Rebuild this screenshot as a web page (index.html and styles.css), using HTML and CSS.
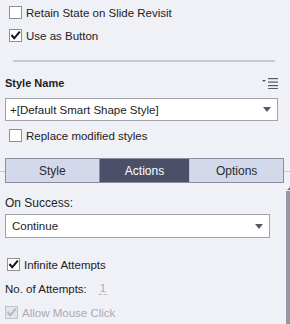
FILE: index.html
```html
<!DOCTYPE html>
<html lang="en">
  <head>
    <meta charset="UTF-8" />
    <title>Properties</title>
    <link rel="stylesheet" href="styles.css">
  </head>
  <body>
    <div class="panel">
      <div class="row row-top">
        <span class="check"></span>
        <span class="label">Retain State on Slide Revisit</span>
      </div>
      <div class="row">
        <span class="check">
          <svg viewBox="0 0 13 13" width="13" height="13"><path d="M2.5 6 L5.2 9.3 L10.8 2.6" fill="none" stroke="#111" stroke-width="2"/></svg>
        </span>
        <span class="label">Use as Button</span>
      </div>

      <div class="divider"></div>

      <div class="section-head">
        <span class="head-title">Style Name</span>
        <svg class="menu-icon" viewBox="0 0 16 12" width="16" height="12">
          <path d="M0 3 L4 3 L2 5 Z" fill="#555a6a"/>
          <rect x="6" y="1" width="10" height="1.2" fill="#555a6a"/>
          <rect x="6" y="4.5" width="10" height="1.2" fill="#555a6a"/>
          <rect x="6" y="8" width="10" height="1.2" fill="#555a6a"/>
          <rect x="6" y="11" width="10" height="1" fill="#555a6a"/>
        </svg>
      </div>
      <div class="select select-style">
        <span>+[Default Smart Shape Style]</span>
        <span class="arrow"></span>
      </div>
      <div class="row row-replace">
        <span class="check"></span>
        <span class="label">Replace modified styles</span>
      </div>

      <div class="tabs-wrap">
        <div class="tabs">
          <div class="tab">Style</div>
          <div class="tab active">Actions</div>
          <div class="tab">Options</div>
        </div>
      </div>

      <div class="scroll-area">
        <div class="content">
          <div class="field-label">On Success:</div>
          <div class="select select-success">
            <span>Continue</span>
            <span class="arrow"></span>
          </div>
          <div class="row row-infinite">
            <span class="check">
              <svg viewBox="0 0 13 13" width="13" height="13"><path d="M2.5 6 L5.2 9.3 L10.8 2.6" fill="none" stroke="#111" stroke-width="2"/></svg>
            </span>
            <span class="label">Infinite Attempts</span>
          </div>
          <div class="row attempts">
            <span class="label">No. of Attempts:</span>
            <span class="num">1</span>
          </div>
          <div class="row disabled">
            <span class="check">
              <svg viewBox="0 0 13 13" width="13" height="13"><path d="M2.5 6 L5.2 9.3 L10.8 2.6" fill="none" stroke="#b4b6c0" stroke-width="2"/></svg>
            </span>
            <span class="label">Allow Mouse Click</span>
          </div>
        </div>
        <div class="scrollbar">
          <span class="scroll-up"></span>
          <span class="thumb"></span>
        </div>
      </div>
    </div>
  </body>
</html>
```

FILE: styles.css
```css
* {
  margin: 0;
  padding: 0;
  box-sizing: border-box;
}

html,
body {
  width: 290px;
  height: 324px;
  overflow: hidden;
}

body {
  background-color: #f0f1f7;
  font-family: "Liberation Sans", Arial, sans-serif;
  font-size: 11.5px;
  color: #222;
}

.panel {
  padding-top: 1px;
}

.row {
  display: flex;
  align-items: center;
  height: 23px;
  padding-left: 9px;
}

.check {
  width: 13px;
  height: 13px;
  border: 1px solid #8e909c;
  background-color: #fff;
  margin-right: 4px;
  display: flex;
  align-items: center;
  justify-content: center;
  overflow: hidden;
}

.check svg {
  flex: none;
}

.divider {
  height: 2px;
  background-color: #c9cad3;
  margin: 13px 15px 0 13px;
}

.section-head {
  display: flex;
  align-items: center;
  justify-content: space-between;
  height: 20px;
  margin-top: 11px;
  padding: 0 12px 0 5px;
}

.head-title {
  font-weight: bold;
  font-size: 11px;
  color: #1e1e1e;
}

.menu-icon {
  display: block;
}

.select {
  display: flex;
  align-items: center;
  justify-content: space-between;
  background-color: #fff;
  border: 1px solid #a1a3ad;
  padding: 0 6px 0 4px;
  font-size: 11.5px;
}

.select-style {
  height: 23px;
  margin: 5px 12px 0 5px;
}

.arrow {
  width: 0;
  height: 0;
  border-left: 4px solid transparent;
  border-right: 4px solid transparent;
  border-top: 5px solid #555a6a;
}

.row-replace {
  margin-top: 3px;
}

.tabs-wrap {
  margin-top: 11px;
  background: linear-gradient(#c9cad3, #c9cad3) no-repeat 0 13px / 100% 1px;
  padding: 0 6px 0 5px;
}

.tabs {
  display: flex;
  height: 25px;
  border: 1px solid #8a8e9e;
  background-color: #d3d9ea;
}

.tab {
  flex: 1;
  display: flex;
  align-items: center;
  justify-content: center;
  font-size: 12px;
  color: #2a2a2a;
}

.tab + .tab {
  border-left: 1px solid #aab0c4;
}

.tab.active {
  flex: 0.97;
  background-color: #4b5068;
  color: #fff;
  border-left: 1px solid #8a8e9e;
  border-right: 1px solid #c0c6d8;
}

.tab.active + .tab {
  border-left: none;
}

.scroll-area {
  display: flex;
}

.content {
  flex: 1;
}

.field-label {
  height: 16px;
  margin-top: 13px;
  padding-left: 5px;
  font-size: 12px;
}

.select-success {
  height: 24px;
  margin: 2px 15px 0 5px;
  padding-left: 6px;
}

.row-infinite {
  margin-top: 15px;
  padding-left: 7px;
}

.attempts {
  padding-left: 5px;
  margin-top: 1px;
}

.num {
  margin-left: 12px;
  color: #a8aab4;
  border-bottom: 1px dotted #a8aab4;
  line-height: 12px;
  padding: 0 1px;
}

.disabled {
  padding-left: 5px;
  margin-top: 1px;
}

.disabled .check {
  background-color: #e4e5ec;
  border-color: #c0c2cc;
}

.disabled .label {
  color: #a8aab4;
}

.scrollbar {
  width: 5px;
  display: flex;
  flex-direction: column;
  align-items: flex-end;
  padding-top: 4px;
}

.scroll-up {
  width: 0;
  height: 0;
  border-left: 3px solid transparent;
  border-bottom: 3px solid #6f7282;
}

.thumb {
  width: 4px;
  height: 140px;
  margin-top: 1px;
  background-color: #9597a8;
}
```
